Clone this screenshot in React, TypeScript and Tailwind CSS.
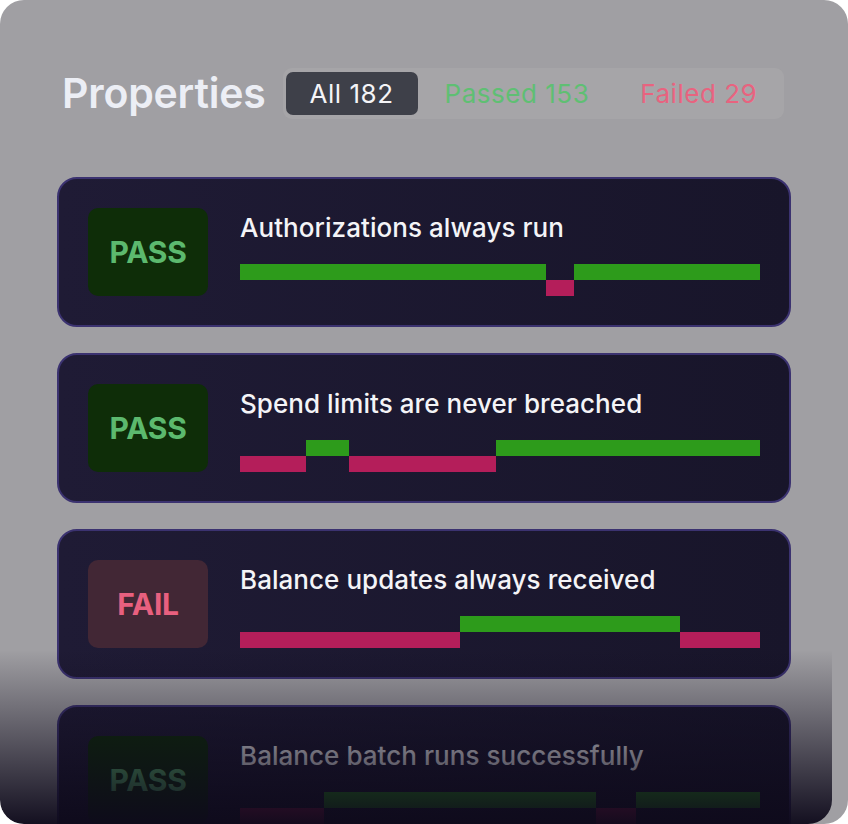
import React from "react";

type Seg = { w: number; up: boolean };

const cards: { title: string; pass: boolean; segs: Seg[] }[] = [
  {
    title: "Authorizations always run",
    pass: true,
    segs: [
      { w: 306, up: true },
      { w: 28, up: false },
      { w: 186, up: true },
    ],
  },
  {
    title: "Spend limits are never breached",
    pass: true,
    segs: [
      { w: 66, up: false },
      { w: 43, up: true },
      { w: 147, up: false },
      { w: 264, up: true },
    ],
  },
  {
    title: "Balance updates always received",
    pass: false,
    segs: [
      { w: 220, up: false },
      { w: 220, up: true },
      { w: 80, up: false },
    ],
  },
  {
    title: "Balance batch runs successfully",
    pass: true,
    segs: [
      { w: 84, up: false },
      { w: 272, up: true },
      { w: 40, up: false },
      { w: 124, up: true },
    ],
  },
];

function Card({ title, pass, segs }: { title: string; pass: boolean; segs: Seg[] }) {
  return (
    <div className="flex shrink-0 gap-[32px] rounded-[20px] border-2 border-[#3b3270] bg-gradient-to-r from-[#1f1b35] to-[#18152a] p-[29px]">
      <div
        className={
          "flex h-[88px] w-[120px] shrink-0 items-center justify-center rounded-[10px] text-[30px] font-bold tracking-[-0.01em] " +
          (pass ? "bg-[#0e2d08] text-[#5cb96e]" : "bg-[#422735] text-[#e8607f]")
        }
      >
        {pass ? "PASS" : "FAIL"}
      </div>
      <div className="flex h-[88px] flex-col justify-between">
        <div className="pt-[4px] text-[26px] font-medium leading-[32px] tracking-[0.002em] text-[#f4f4f7]">{title}</div>
        <div className="flex h-[32px] w-[520px]">
          {segs.map((s, i) => (
            <div key={i} className="flex h-[32px] flex-col" style={{ width: s.w }}>
              <div className={"h-[16px] " + (s.up ? "bg-[#2d9b1b]" : "")} />
              <div className={"h-[16px] " + (!s.up ? "bg-[#b41e5a]" : "")} />
            </div>
          ))}
        </div>
      </div>
    </div>
  );
}

export default function App() {
  return (
    <div className="h-[824px] w-[848px] bg-white" style={{ fontFamily: "Inter, 'Noto Sans', sans-serif" }}>
      <div className="relative h-[824px] w-[848px] overflow-hidden rounded-[24px] bg-[#a09fa3] px-[57px] pt-[68px]">
        <div className="flex items-center gap-[17px]">
          <div className="pl-[5px] text-[41px] font-semibold leading-[51px] tracking-[-0.005em] text-[#eceef5]">
            Properties
          </div>
          <div className="flex h-[51px] items-center gap-[3px] rounded-[9px] bg-[#a6a5a8] px-[3px]">
            <div className="flex h-[43px] items-center rounded-[7px] bg-[#3e4049] px-[24px] text-[26px] tracking-[0.02em] text-[#f4f4f7]">
              All 182
            </div>
            <div className="flex h-[43px] items-center px-[24px] text-[26px] tracking-[0.02em] text-[#5fbf73]">
              Passed 153
            </div>
            <div className="flex h-[43px] items-center px-[24px] text-[26px] tracking-[0.02em] text-[#e8637f]">
              Failed 29
            </div>
          </div>
        </div>
        <div className="mt-[58px] flex flex-col gap-[26px]">
          {cards.map((c) => (
            <Card key={c.title} {...c} />
          ))}
        </div>
        <div className="absolute bottom-0 left-0 h-[174px] w-[832px] rounded-b-[24px] bg-gradient-to-b from-[#0e0a1b00] to-[#0e0a1bf5]" />
      </div>
    </div>
  );
}
